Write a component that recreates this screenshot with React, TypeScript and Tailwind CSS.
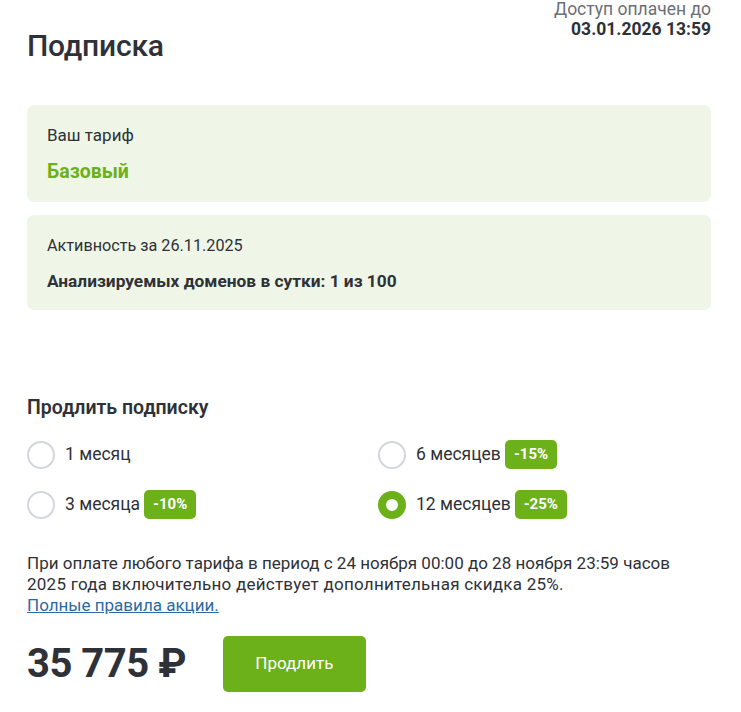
import { useState } from "react";

const periods = [
  { id: 1, label: "1 месяц", discount: null },
  { id: 6, label: "6 месяцев", discount: "-15%" },
  { id: 3, label: "3 месяца", discount: "-10%" },
  { id: 12, label: "12 месяцев", discount: "-25%" },
];

function Radio({ checked }: { checked: boolean }) {
  return checked ? (
    <span className="size-[28px] shrink-0 rounded-full border-[8px] border-[#6cb01a] bg-white" />
  ) : (
    <span className="size-[28px] shrink-0 rounded-full border-2 border-[#d3d7dc] bg-white" />
  );
}

export default function App() {
  const [period, setPeriod] = useState(12);

  return (
    <div className="min-h-[712px] bg-white font-['Roboto',sans-serif] text-[#2e3137]">
      <div className="px-[27px]">
        <header className="flex items-start justify-between pr-[3px]">
          <h1 className="mt-[28px] text-[30px] font-medium leading-9 tracking-[-0.2px]">Подписка</h1>
          <div className="mt-[-1px] text-right leading-[20px]">
            <div className="text-[17.5px] text-[#6b6f76]">Доступ оплачен до</div>
            <div className="text-[17.5px] font-bold">03.01.2026 13:59</div>
          </div>
        </header>

        <div className="mt-[41px] flex flex-col gap-[13px] pr-[3px]">
          <section className="rounded-[7px] bg-[#f0f6e7] px-[20px] pb-[18px] pt-[19px]">
            <div className="text-[17px] leading-[22px]">Ваш тариф</div>
            <div className="mt-[14px] text-[19.5px] font-bold leading-[24px] text-[#6cb01a]">Базовый</div>
          </section>
          <section className="rounded-[7px] bg-[#f0f6e7] px-[20px] pb-[18px] pt-[20px]">
            <div className="text-[16.2px] leading-[22px]">Активность за 26.11.2025</div>
            <div className="mt-[13px] text-[17.3px] font-bold leading-[22px]">
              Анализируемых доменов в сутки: 1 из 100
            </div>
          </section>
        </div>

        <h2 className="mt-[85px] text-[19.5px] font-semibold leading-[26px]">Продлить подписку</h2>

        <div className="mt-[19px] grid grid-cols-[351px_1fr] gap-y-[21px]">
          {periods.map((p) => (
            <button
              key={p.id}
              type="button"
              onClick={() => setPeriod(p.id)}
              className="flex h-[29px] items-center gap-[10px] text-left"
            >
              <Radio checked={period === p.id} />
              <span className="flex items-center gap-[4px] text-[17.5px]">
                {p.label}
                {p.discount && (
                  <span className="rounded-[5px] bg-[#6cb01a] px-[9px] py-[5px] text-[15px] font-bold leading-[19px] text-white">
                    {p.discount}
                  </span>
                )}
              </span>
            </button>
          ))}
        </div>

        <p className="mt-[34px] text-[17px] leading-[21px]">
          При оплате любого тарифа в период с 24 ноября 00:00 до 28 ноября 23:59 часов
          <br />
          <span className="tracking-[0.25px]">2025 года включительно действует дополнительная скидка 25%.</span>
          <br />
          <a href="#" className="text-[#2b6aa2] underline">
            Полные правила акции.
          </a>
        </p>

        <div className="mt-[20px] flex items-center gap-[37px]">
          <div className="text-[40px] font-bold leading-none tracking-[-0.5px]">35 775 ₽</div>
          <button
            type="button"
            className="h-[56px] w-[143px] rounded-[5px] bg-[#6cb01a] text-[17px] text-white"
          >
            Продлить
          </button>
        </div>
      </div>
    </div>
  );
}
